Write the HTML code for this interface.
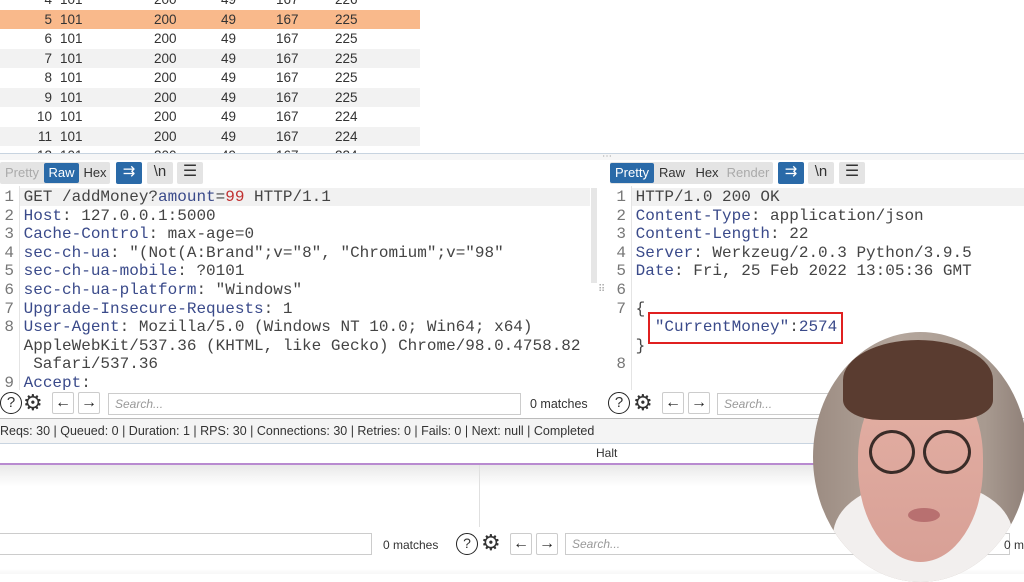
<!DOCTYPE html>
<html><head><style>
*{margin:0;padding:0;box-sizing:border-box}
body{width:1024px;height:574px;overflow:hidden;background:#fff;position:relative;font-family:"Liberation Sans",sans-serif;color:#333}
.a{position:absolute}
.row{position:absolute;left:0;width:420px;height:19.5px;font-size:13.5px;line-height:19.5px;color:#333}
.row span{position:absolute}
.mono{font-family:"Liberation Mono",monospace;font-size:16px;white-space:pre;color:#444}
.k{color:#3a4a8a}
.ln{display:inline-block;text-align:right;color:#777}
.btn{position:absolute;height:20px;font-size:13px;line-height:20px;text-align:center;border-radius:2px}
.search{position:absolute;height:22px;border:1px solid #ccc;background:#fff;font-size:12px;font-style:italic;color:#999;padding-left:6px;line-height:20px}
.ib{position:absolute;width:22px;height:22px;border:1px solid #ccc;border-radius:2px;background:#fff;font-size:16px;line-height:19px;text-align:center;color:#222}
</style></head><body>
<div class="row" style="top:-10px;background:#fff"><span style="right:368px">4</span><span style="left:60px">101</span><span style="left:154px">200</span><span style="left:221px">49</span><span style="left:276px">167</span><span style="left:335px">226</span></div>
<div class="row" style="top:9.5px;background:#f9b98b"><span style="right:368px">5</span><span style="left:60px">101</span><span style="left:154px">200</span><span style="left:221px">49</span><span style="left:276px">167</span><span style="left:335px">225</span></div>
<div class="row" style="top:29px;background:#fff"><span style="right:368px">6</span><span style="left:60px">101</span><span style="left:154px">200</span><span style="left:221px">49</span><span style="left:276px">167</span><span style="left:335px">225</span></div>
<div class="row" style="top:48.5px;background:#f2f2f2"><span style="right:368px">7</span><span style="left:60px">101</span><span style="left:154px">200</span><span style="left:221px">49</span><span style="left:276px">167</span><span style="left:335px">225</span></div>
<div class="row" style="top:68px;background:#fff"><span style="right:368px">8</span><span style="left:60px">101</span><span style="left:154px">200</span><span style="left:221px">49</span><span style="left:276px">167</span><span style="left:335px">225</span></div>
<div class="row" style="top:87.5px;background:#f2f2f2"><span style="right:368px">9</span><span style="left:60px">101</span><span style="left:154px">200</span><span style="left:221px">49</span><span style="left:276px">167</span><span style="left:335px">225</span></div>
<div class="row" style="top:107px;background:#fff"><span style="right:368px">10</span><span style="left:60px">101</span><span style="left:154px">200</span><span style="left:221px">49</span><span style="left:276px">167</span><span style="left:335px">224</span></div>
<div class="row" style="top:126.5px;background:#f2f2f2"><span style="right:368px">11</span><span style="left:60px">101</span><span style="left:154px">200</span><span style="left:221px">49</span><span style="left:276px">167</span><span style="left:335px">224</span></div>
<div class="row" style="top:146px;height:7px;overflow:hidden;background:#fff;line-height:19px"><span style="right:368px">12</span><span style="left:60px">101</span><span style="left:154px">200</span><span style="left:221px">49</span><span style="left:276px">167</span><span style="left:335px">224</span></div>
<div class="a" style="left:0;top:153px;width:1024px;height:1px;background:#c8d4e0"></div>
<div class="a" style="left:0;top:154px;width:1024px;height:6px;background:#f6f6f6"></div>

<div class="a" style="left:0;top:162px;width:110px;height:22px;background:#e4e4e4;border-radius:2px"></div>
<div class="btn" style="left:2px;top:163px;width:40px;color:#aaa">Pretty</div>
<div class="btn" style="left:44px;top:163px;width:35px;background:#2a6aa8;color:#fff">Raw</div>
<div class="btn" style="left:80px;top:163px;width:30px;color:#333">Hex</div>
<div class="btn" style="left:116px;top:162px;width:26px;height:22px;background:#2a6aa8;color:#fff;font-size:15px">⇉</div>
<div class="btn" style="left:147px;top:162px;width:26px;height:22px;background:#e4e4e4;color:#333;font-size:15px">\n</div>
<div class="btn" style="left:177px;top:162px;width:26px;height:22px;background:#e4e4e4;color:#333;font-size:16px">☰</div>

<div class="a" style="left:20px;top:188px;width:570px;height:18px;background:#f1f1f1"></div>
<div class="a" style="left:591px;top:188px;width:6px;height:95px;background:#e6e6e6"></div>
<div class="a" style="left:19px;top:186px;width:1px;height:204px;background:#e4e4e4"></div>
<div class="a mono" style="left:-4px;top:188px;line-height:18.6px"><span class="ln" style="width:18px">1</span> GET /addMoney?<span class="k">amount</span>=<span style="color:#c03030">99</span> HTTP/1.1
<span class="ln" style="width:18px">2</span> <span class="k">Host</span>: 127.0.0.1:5000
<span class="ln" style="width:18px">3</span> <span class="k">Cache-Control</span>: max-age=0
<span class="ln" style="width:18px">4</span> <span class="k">sec-ch-ua</span>: "(Not(A:Brand";v="8", "Chromium";v="98"
<span class="ln" style="width:18px">5</span> <span class="k">sec-ch-ua-mobile</span>: ?0101
<span class="ln" style="width:18px">6</span> <span class="k">sec-ch-ua-platform</span>: "Windows"
<span class="ln" style="width:18px">7</span> <span class="k">Upgrade-Insecure-Requests</span>: 1
<span class="ln" style="width:18px">8</span> <span class="k">User-Agent</span>: Mozilla/5.0 (Windows NT 10.0; Win64; x64)
<span class="ln" style="width:18px"> </span> AppleWebKit/537.36 (KHTML, like Gecko) Chrome/98.0.4758.82
<span class="ln" style="width:18px"> </span>  Safari/537.36
<span class="ln" style="width:18px">9</span> <span class="k">Accept</span>:</div>
<div class="a" style="left:0;top:390px;width:1024px;height:28px;background:#fff"></div>
<div class="a" style="left:0;top:392px;width:22px;height:22px;border:1.5px solid #222;border-radius:50%;text-align:center;font-size:15px;line-height:19px">?</div>
<div class="a" style="left:23px;top:391px;font-size:22px;line-height:24px;color:#333">⚙</div>
<div class="ib" style="left:52px;top:392px">←</div>
<div class="ib" style="left:78px;top:392px">→</div>
<div class="search" style="left:108px;top:393px;width:413px">Search...</div>
<div class="a" style="left:530px;top:397px;font-size:12.5px">0 matches</div>

<div class="a" style="left:598px;top:284px;font-size:10px;color:#aaa">⠿</div>
<div class="a" style="left:602px;top:151px;font-size:10px;color:#999">⋯</div>

<div class="a" style="left:610px;top:162px;width:163px;height:22px;background:#e4e4e4;border-radius:2px"></div>
<div class="btn" style="left:610px;top:163px;width:44px;background:#2a6aa8;color:#fff">Pretty</div>
<div class="btn" style="left:656px;top:163px;width:32px">Raw</div>
<div class="btn" style="left:692px;top:163px;width:30px">Hex</div>
<div class="btn" style="left:725px;top:163px;width:46px;color:#aaa">Render</div>
<div class="btn" style="left:778px;top:162px;width:26px;height:22px;background:#2a6aa8;color:#fff;font-size:15px">⇉</div>
<div class="btn" style="left:808px;top:162px;width:26px;height:22px;background:#e4e4e4;font-size:15px">\n</div>
<div class="btn" style="left:839px;top:162px;width:26px;height:22px;background:#e4e4e4;font-size:16px">☰</div>
<div class="a" style="left:632px;top:188px;width:392px;height:18px;background:#f1f1f1"></div>
<div class="a" style="left:631px;top:186px;width:1px;height:204px;background:#e4e4e4"></div>
<div class="a mono" style="left:612px;top:188px;line-height:18.6px"><span class="ln" style="width:14px">1</span> HTTP/1.0 200 OK
<span class="ln" style="width:14px">2</span> <span class="k">Content-Type</span>: application/json
<span class="ln" style="width:14px">3</span> <span class="k">Content-Length</span>: 22
<span class="ln" style="width:14px">4</span> <span class="k">Server</span>: Werkzeug/2.0.3 Python/3.9.5
<span class="ln" style="width:14px">5</span> <span class="k">Date</span>: Fri, 25 Feb 2022 13:05:36 GMT
<span class="ln" style="width:14px">6</span>
<span class="ln" style="width:14px">7</span> {
<span class="ln" style="width:14px"> </span>   <span class="k">"CurrentMoney"</span>:<span class="k">2574</span>
<span class="ln" style="width:14px"> </span> }
<span class="ln" style="width:14px">8</span></div>
<div class="a" style="left:648px;top:312px;width:195px;height:32px;border:2px solid #e02020"></div>
<div class="a" style="left:608px;top:392px;width:22px;height:22px;border:1.5px solid #222;border-radius:50%;text-align:center;font-size:15px;line-height:19px">?</div>
<div class="a" style="left:633px;top:391px;font-size:22px;line-height:24px;color:#333">⚙</div>
<div class="ib" style="left:662px;top:392px">←</div>
<div class="ib" style="left:688px;top:392px">→</div>
<div class="search" style="left:717px;top:393px;width:200px">Search...</div>

<div class="a" style="left:0;top:418px;width:1024px;height:1px;background:#bbb"></div>
<div class="a" style="left:0;top:419px;width:1024px;height:24px;background:#f4f4f4;font-size:12.5px;line-height:24px;color:#333;white-space:nowrap">Reqs: 30 | Queued: 0 | Duration: 1 | RPS: 30 | Connections: 30 | Retries: 0 | Fails: 0 | Next: null | Completed</div>
<div class="a" style="left:0;top:443px;width:1024px;height:1px;background:#c8d4e0"></div>
<div class="a" style="left:0;top:444px;width:1024px;height:19px;background:#fff;font-size:12px;line-height:19px"><span class="a" style="left:596px">Halt</span></div>
<div class="a" style="left:0;top:463px;width:1024px;height:2px;background:#b88ad0"></div>
<div class="a" style="left:0;top:465px;width:1024px;height:109px;background:linear-gradient(#e8e8e8,#f6f6f6 12px,#fff 22px,#fff 95%,#f7f7f7)"></div>
<div class="a" style="left:479px;top:465px;width:1px;height:62px;background:#e0e0e0"></div>
<div class="search" style="left:-2px;top:533px;width:374px"></div>
<div class="a" style="left:383px;top:538px;font-size:12px">0 matches</div>
<div class="a" style="left:456px;top:533px;width:22px;height:22px;border:1.5px solid #222;border-radius:50%;text-align:center;font-size:14px;line-height:19px">?</div>
<div class="a" style="left:481px;top:531px;font-size:22px;line-height:24px;color:#333">⚙</div>
<div class="ib" style="left:510px;top:533px">←</div>
<div class="ib" style="left:536px;top:533px">→</div>
<div class="search" style="left:565px;top:533px;width:445px">Search...</div>
<div class="a" style="left:1004px;top:538px;font-size:12px">0 m</div>

<div class="a" style="left:813px;top:332px;width:215px;height:250px;border-radius:50%;overflow:hidden;background:linear-gradient(90deg,#9c8c82,#b4a69c 40%,#a89a90 80%,#8f8078)">
 <div class="a" style="left:20px;top:150px;width:180px;height:120px;border-radius:45%;background:#f2efee"></div>
 <div class="a" style="left:45px;top:40px;width:125px;height:190px;border-radius:45% 45% 50% 50%;background:linear-gradient(#e4b0a4,#d8a096)"></div>
 <div class="a" style="left:30px;top:8px;width:150px;height:80px;border-radius:50% 50% 25% 25%;background:#5a3c30"></div>
 <div class="a" style="left:56px;top:98px;width:46px;height:44px;border:3px solid #3a2c28;border-radius:50%"></div>
 <div class="a" style="left:110px;top:98px;width:48px;height:44px;border:3px solid #3a2c28;border-radius:50%"></div>
 <div class="a" style="left:95px;top:176px;width:32px;height:14px;border-radius:50%;background:#b87070"></div>
</div>
</body></html>
